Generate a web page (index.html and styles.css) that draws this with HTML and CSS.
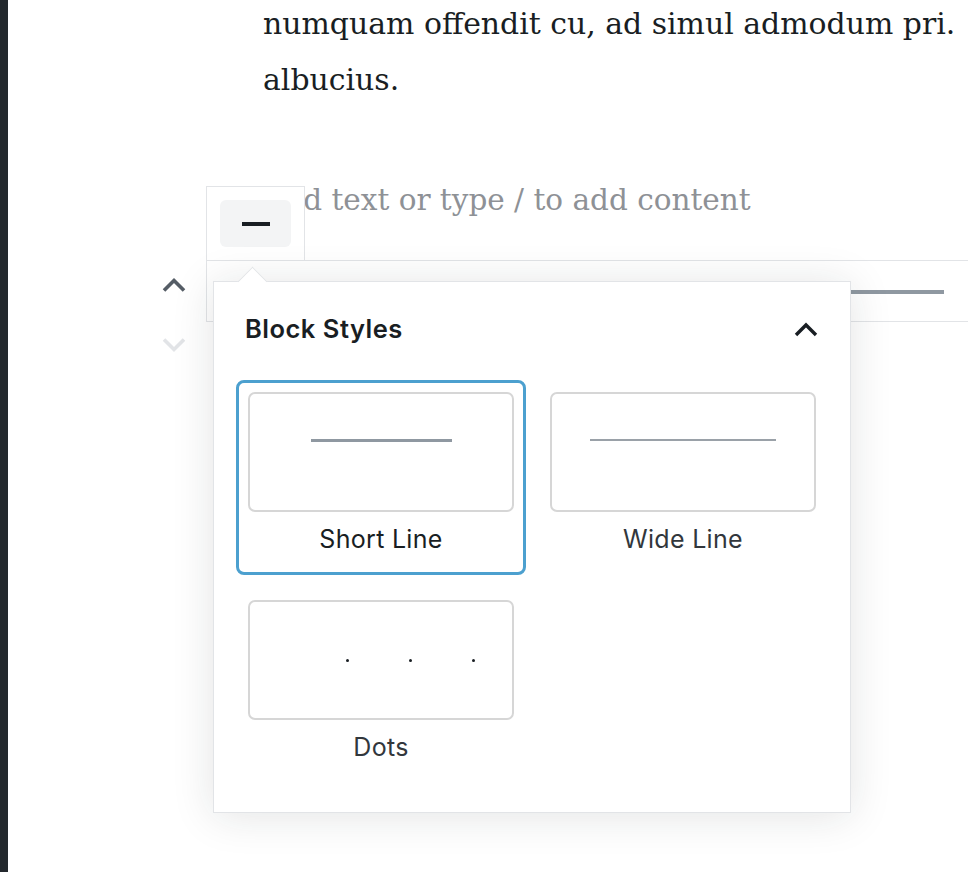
FILE: index.html
```html
<!DOCTYPE html>
<html lang="en">
<head>
<meta charset="utf-8">
<title>Separator block styles</title>
<link rel="stylesheet" href="styles.css">
</head>
<body>
<div class="app">
  <aside class="sidebar"></aside>
  <main class="canvas">
    <p class="para">numquam offendit cu, ad simul admodum pri.<br>albucius.</p>
    <p class="placeholder">Add text or type / to add content</p>
    <div class="block">
      <div class="toolbar">
        <button class="tool-btn" aria-label="Separator"><span class="sep-icon"></span></button>
      </div>
      <div class="movers">
        <svg class="mover up" width="24" height="16" viewBox="0 0 24 16"><polyline points="2,13.5 12,3.5 22,13.5" fill="none" stroke="currentColor" stroke-width="3.6"/></svg>
        <svg class="mover down" width="24" height="16" viewBox="0 0 24 16"><polyline points="2,2.5 12,12.5 22,2.5" fill="none" stroke="currentColor" stroke-width="3.6"/></svg>
      </div>
      <div class="hr"></div>
      <div class="popover">
        <span class="arrow"></span>
        <div class="pop-header">
          <h2 class="pop-title">Block Styles</h2>
          <svg class="collapse" width="24" height="16" viewBox="0 0 24 16"><polyline points="2,14 12,4 22,14" fill="none" stroke="currentColor" stroke-width="3.4"/></svg>
        </div>
        <div class="styles-grid">
          <div class="style-item active">
            <div class="preview"><span class="line short"></span></div>
            <div class="label">Short Line</div>
          </div>
          <div class="style-item">
            <div class="preview"><span class="line wide"></span></div>
            <div class="label">Wide Line</div>
          </div>
          <div class="style-item">
            <div class="preview dots-preview"><span class="dot"></span><span class="dot"></span><span class="dot"></span></div>
            <div class="label">Dots</div>
          </div>
        </div>
      </div>
    </div>
  </main>
</div>
</body>
</html>
```

FILE: styles.css
```css
* { box-sizing: border-box; }
html, body { margin: 0; padding: 0; background: #fff; }
body { width: 968px; height: 872px; overflow: hidden; }

.app { display: flex; height: 872px; }
.sidebar { width: 8px; flex: none; background: #23282d; }
.canvas { flex: 1; position: relative; overflow: hidden; }

.para {
  margin: -4px 0 0 255px;
  font-family: "DejaVu Serif", serif;
  font-size: 29.9px;
  line-height: 56px;
  color: #191e23;
  white-space: nowrap;
}
.placeholder {
  margin: 64px 0 0 255px;
  font-family: "DejaVu Serif", serif;
  font-size: 29.5px;
  line-height: 56px;
  color: #8e9196;
  white-space: nowrap;
}

.block {
  position: relative;
  margin: 32px 0 0 198px;
  width: 820px;
  height: 62px;
  border: 1px solid #e2e4e7;
}
.hr {
  margin: 29px 0 0 56px;
  width: 681px;
  height: 4px;
  background: #8f98a1;
}

.toolbar {
  position: absolute;
  left: -1px;
  top: -75px;
  width: 99px;
  height: 74px;
  background: #fff;
  border: 1px solid #e2e4e7;
  border-bottom: none;
  padding: 13px 0 0 13px;
}
.tool-btn {
  display: flex;
  align-items: center;
  justify-content: center;
  width: 71px;
  height: 47px;
  border: 0;
  border-radius: 6px;
  background: #f3f4f5;
  padding: 0;
}
.sep-icon { display: block; width: 28px; height: 4px; background: #191e23; }

.movers {
  position: absolute;
  left: -45px;
  top: 16px;
  display: flex;
  flex-direction: column;
  gap: 44px;
}
.mover { display: block; }
.mover.up { color: #555d66; }
.mover.down { color: #e2e4e7; }

.popover {
  position: absolute;
  left: 6px;
  top: 20px;
  width: 638px;
  height: 532px;
  background: #fff;
  border: 1px solid #e2e4e7;
  box-shadow: 0 3px 40px rgba(25, 30, 35, 0.12);
  font-family: Inter, "Noto Sans", sans-serif;
}
.arrow {
  position: absolute;
  left: 28px;
  top: -11px;
  width: 21px;
  height: 21px;
  background: #fff;
  border-top: 1px solid #e2e4e7;
  border-left: 1px solid #e2e4e7;
  transform: rotate(45deg);
}
.pop-header {
  display: flex;
  align-items: center;
  justify-content: space-between;
  padding: 32px 32px 0 31px;
  height: 62px;
}
.pop-title {
  margin: 0;
  font-size: 25.5px;
  font-weight: 600;
  letter-spacing: 0.5px;
  line-height: 30px;
  color: #191e23;
}
.collapse { display: block; color: #191e23; }

.styles-grid {
  display: grid;
  grid-template-columns: 290px 290px;
  column-gap: 12px;
  row-gap: 13px;
  margin: 36px 0 0 22px;
}
.style-item {
  border: 3px solid transparent;
  border-radius: 8px;
  padding: 9px;
  height: 195px;
}
.style-item.active { border-color: #4ca0cf; }
.preview {
  height: 120px;
  border: 2px solid #d6d6d6;
  border-radius: 7px;
  display: flex;
  align-items: center;
  justify-content: center;
}
.line { display: block; background: #8f98a1; }
.line.short { width: 141px; height: 3px; margin-top: -24px; }
.line.wide { width: 186px; height: 2px; margin-top: -24px; background: #9aa1a8; }
.dots-preview { gap: 60px; padding-left: 58px; }
.dot { display: block; width: 3px; height: 3px; border-radius: 50%; background: #191e23; }
.label {
  margin-top: 12px;
  height: 30px;
  line-height: 30px;
  text-align: center;
  font-size: 25px;
  letter-spacing: 0.3px;
  color: #32373c;
}
.style-item.active .label { color: #191e23; }
```
